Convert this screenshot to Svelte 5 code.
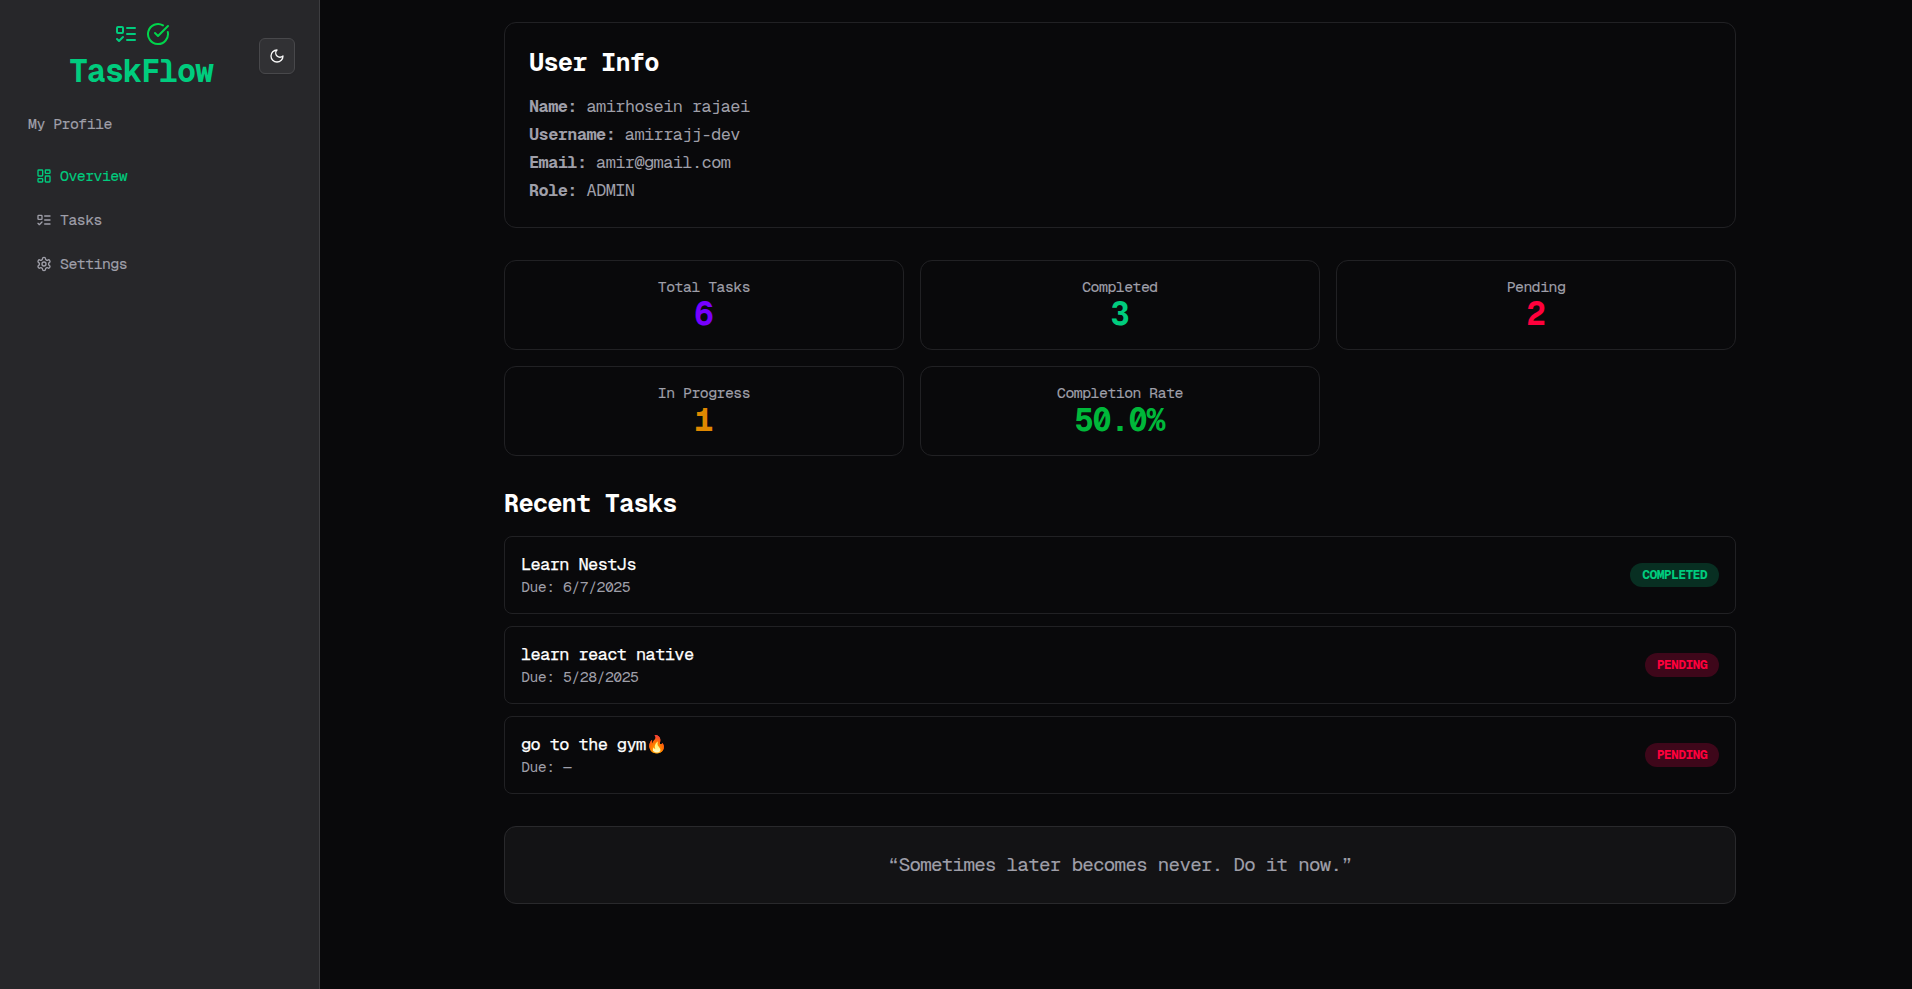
<script>
  const nav = [
    { label: 'Overview', icon: 'dashboard', active: true },
    { label: 'Tasks', icon: 'list' },
    { label: 'Settings', icon: 'settings' }
  ];
  const info = [
    ['Name:', 'amirhosein rajaei'],
    ['Username:', 'amirrajj-dev'],
    ['Email:', 'amir@gmail.com'],
    ['Role:', 'ADMIN']
  ];
  const stats = [
    { label: 'Total Tasks', value: '6', tone: 'violet' },
    { label: 'Completed', value: '3', tone: 'emerald' },
    { label: 'Pending', value: '2', tone: 'rose' },
    { label: 'In Progress', value: '1', tone: 'amber' },
    { label: 'Completion Rate', value: '50.0%', tone: 'green' }
  ];
  const tasks = [
    { title: 'Learn NestJs', due: '6/7/2025', status: 'COMPLETED' },
    { title: 'learn react native', due: '5/28/2025', status: 'PENDING' },
    { title: 'go to the gym🔥', due: '—', status: 'PENDING' }
  ];
</script>

{#snippet icon(name)}
  <svg viewBox="0 0 24 24" fill="none" stroke="currentColor" stroke-width="2" stroke-linecap="round" stroke-linejoin="round">
    {#if name === 'dashboard'}
      <rect width="7" height="9" x="3" y="3" rx="1" />
      <rect width="7" height="5" x="14" y="3" rx="1" />
      <rect width="7" height="9" x="14" y="12" rx="1" />
      <rect width="7" height="5" x="3" y="16" rx="1" />
    {:else if name === 'list'}
      <rect x="3" y="5" width="6" height="6" rx="1" />
      <path d="m3 17 2 2 4-4" />
      <path d="M13 6h8" /><path d="M13 12h8" /><path d="M13 18h8" />
    {:else if name === 'check'}
      <path d="M21.801 10A10 10 0 1 1 17 3.335" />
      <path d="m9 11 3 3L22 4" />
    {:else if name === 'moon'}
      <path d="M12 3a6 6 0 0 0 9 9 9 9 0 1 1-9-9Z" />
    {:else}
      <path d="M12.22 2h-.44a2 2 0 0 0-2 2v.18a2 2 0 0 1-1 1.73l-.43.25a2 2 0 0 1-2 0l-.15-.08a2 2 0 0 0-2.73.73l-.22.38a2 2 0 0 0 .73 2.73l.15.1a2 2 0 0 1 1 1.72v.51a2 2 0 0 1-1 1.74l-.15.09a2 2 0 0 0-.73 2.73l.22.38a2 2 0 0 0 2.73.73l.15-.08a2 2 0 0 1 2 0l.43.25a2 2 0 0 1 1 1.73V20a2 2 0 0 0 2 2h.44a2 2 0 0 0 2-2v-.18a2 2 0 0 1 1-1.73l.43-.25a2 2 0 0 1 2 0l.15.08a2 2 0 0 0 2.73-.73l.22-.39a2 2 0 0 0-.73-2.73l-.15-.08a2 2 0 0 1-1-1.74v-.5a2 2 0 0 1 1-1.74l.15-.09a2 2 0 0 0 .73-2.73l-.22-.38a2 2 0 0 0-2.73-.73l-.15.08a2 2 0 0 1-2 0l-.43-.25a2 2 0 0 1-1-1.73V4a2 2 0 0 0-2-2z" />
      <circle cx="12" cy="12" r="3" />
    {/if}
  </svg>
{/snippet}

<div class="app">
  <aside class="sidebar">
    <header class="top">
      <div class="brand">
        <div class="marks">
          {@render icon('list')}
          <span class="check">{@render icon('check')}</span>
        </div>
        <h1>TaskFlow</h1>
      </div>
      <button class="theme" aria-label="Toggle theme">{@render icon('moon')}</button>
    </header>
    <p class="section">My Profile</p>
    <nav>
      {#each nav as item}
        <a href="#{item.icon}" class:active={item.active}>{@render icon(item.icon)}<span>{item.label}</span></a>
      {/each}
    </nav>
  </aside>

  <main>
    <section class="card user">
      <h2>User Info</h2>
      <div class="rows">
        {#each info as [key, value]}
          <p><strong>{key}</strong> {value}</p>
        {/each}
      </div>
    </section>

    <section class="stats">
      {#each stats as s}
        <div class="card stat">
          <p class="label">{s.label}</p>
          <p class="value {s.tone}">{s.value}</p>
        </div>
      {/each}
    </section>

    <section class="recent">
      <h2>Recent Tasks</h2>
      <div class="tasks">
        {#each tasks as t}
          <div class="task">
            <div>
              <p class="title">{t.title}</p>
              <p class="due">Due: {t.due}</p>
            </div>
            <span class="badge" class:done={t.status === 'COMPLETED'}>{t.status}</span>
          </div>
        {/each}
      </div>
    </section>

    <section class="card quote">“Sometimes later becomes never. Do it now.”</section>
  </main>
</div>

<style>
  :global(body) {
    margin: 0;
    background: #09090b;
  }
  .app {
    --fs: 1.06;
    display: flex;
    height: 989px;
    overflow: hidden;
    color: #9f9fa9;
    background: #09090b;
    font-family: 'Geist Mono', 'Liberation Mono', monospace;
    font-size: calc(16px * var(--fs));
    line-height: 24px;
    letter-spacing: -0.034em;
  }
  .app *, .app { box-sizing: border-box; }
  h1, h2, p { margin: 0; letter-spacing: -0.034em; }
  svg { display: block; width: 16px; height: 16px; flex: none; }

  .sidebar {
    width: 320px;
    flex: none;
    padding: 22px 24px;
    background: #27272a;
    border-right: 1px solid #3d3d40;
  }
  .top { display: flex; align-items: center; }
  .brand {
    flex: 1;
    display: flex;
    flex-direction: column;
    align-items: center;
    gap: 8px;
    color: #00cc7e;
  }
  .marks { display: flex; gap: 8px; }
  .marks svg { width: 24px; height: 24px; }
  .check { color: #00d54b; }
  .check :global(svg) { width: 24px; height: 24px; }
  h1 {
    padding: 0 1px 2px 0;
    font-size: calc(30px * var(--fs));
    line-height: 34px;
    font-weight: 700;
  }
  .theme {
    width: 36px;
    height: 36px;
    padding: 0;
    display: flex;
    align-items: center;
    justify-content: center;
    color: #fafafa;
    background: #313134;
    border: 1px solid #48484b;
    border-radius: 6px;
    box-shadow: 0 1px 2px rgb(0 0 0 / 0.05);
  }
  .section {
    margin-top: 24px;
    padding-left: 4px;
    font-size: calc(14px * var(--fs));
    line-height: 20px;
    -webkit-text-stroke: 0.15px currentColor;
  }
  nav {
    margin-top: 24px;
    display: flex;
    flex-direction: column;
    gap: 8px;
  }
  nav a {
    display: flex;
    align-items: center;
    gap: 8px;
    height: 36px;
    padding: 0 12px;
    color: inherit;
    text-decoration: none;
    font-size: calc(14px * var(--fs));
    letter-spacing: -0.034em;
  }
  nav span { -webkit-text-stroke: 0.15px currentColor; }
  nav a.active { color: #00cc7e; }

  main {
    flex: 1;
    padding: 22px 176px 0 184px;
    display: flex;
    flex-direction: column;
    gap: 32px;
  }
  .card {
    border: 1px solid #212124;
    border-radius: 12px;
  }
  h2 {
    padding-bottom: 2px;
    color: #fff;
    font-size: calc(24px * var(--fs));
    line-height: 30px;
    font-weight: 700;
  }
  .user { padding: 24px; }
  .rows {
    margin-top: 16px;
    display: flex;
    flex-direction: column;
    gap: 4px;
  }
  .rows p, .title {
    padding-bottom: 2px;
    line-height: 22px;
  }
  .stats {
    display: grid;
    grid-template-columns: repeat(3, 1fr);
    gap: 16px;
  }
  .stat { padding: 16px; text-align: center; }
  .label {
    font-size: calc(14px * var(--fs));
    line-height: 20px;
    -webkit-text-stroke: 0.15px currentColor;
  }
  .value {
    padding: 0 1px 2px 0;
    font-size: calc(30px * var(--fs));
    line-height: 34px;
    font-weight: 700;
  }
  .violet { color: #7700ff; }
  .emerald { color: #00cc7e; }
  .rose { color: #ff003c; }
  .amber { color: #e08800; }
  .green { color: #00b83a; }

  .tasks {
    margin-top: 16px;
    display: flex;
    flex-direction: column;
    gap: 12px;
  }
  .task {
    display: flex;
    align-items: center;
    justify-content: space-between;
    padding: 16px;
    border: 1px solid #212124;
    border-radius: 8px;
  }
  .title { color: #fff; -webkit-text-stroke: 0.25px currentColor; }
  .due { font-size: calc(14px * var(--fs)); line-height: 20px; }
  .badge {
    padding: 4px 12px;
    border-radius: 999px;
    font-size: 13.2px;
    line-height: 16px;
    font-weight: 700;
    letter-spacing: -0.72px;
    color: #ff003c;
    background: #3e071a;
  }
  .badge.done { color: #00cc7e; background: #082f22; }
  .quote {
    padding: 24px;
    text-align: center;
    font-size: calc(18px * var(--fs));
    line-height: 28px;
    letter-spacing: -0.034em;
    background: #131315;
    border-color: #29292c;
    -webkit-text-stroke: 0.15px currentColor;
  }
</style>
